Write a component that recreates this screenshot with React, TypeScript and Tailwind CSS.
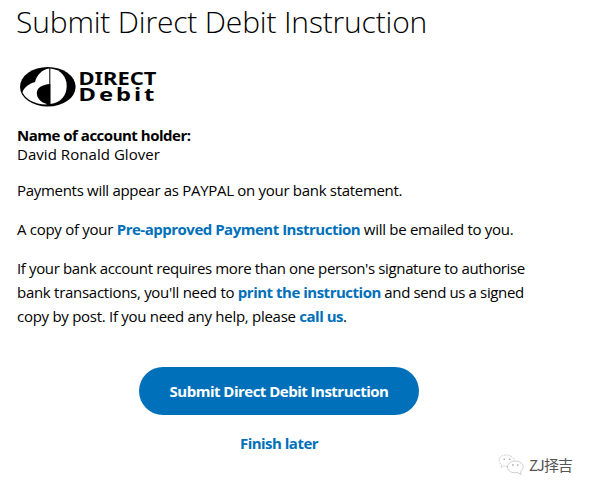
import React from 'react';

function DirectDebitLogo() {
  return (
    <svg className="-ml-[1px] block" width="144" height="44" viewBox="16 64 144 44" role="img" aria-label="Direct Debit">
      <ellipse cx="47.8" cy="86.8" rx="27.8" ry="19.8" fill="#000" />
      <path d="M50.3 68.6 C61 69.5 66.7 77 66.7 86 C66.7 95 61 103 50.3 104 Z" fill="#fff" />
      <path d="M49.3 68.6 C42 69.5 37 75 35 82 C28.5 84 23.5 88 22.5 92.5 C26 99.5 34 104 46 104.5 L49.3 103 Z" fill="#fff" />
      <path d="M50.3 84 C42 84.5 36.8 88 36.8 93 C36.8 99 42 103.5 50.3 105 Z" fill="#000" />
      <text x="78.5" y="85.4" fontSize="17.5" fontWeight="700" fontFamily="Noto Sans" textLength="78" lengthAdjust="spacingAndGlyphs">DIRECT</text>
      <text x="56.1" y="101" fontSize="17" fontWeight="700" fontFamily="Noto Sans" transform="scale(1.4 1)" letterSpacing="2.1">Debit</text>
    </svg>
  );
}

function WeChatIcon() {
  return (
    <svg className="block" width="27" height="22" viewBox="0 0 27 22" fill="none" stroke="#c8c8c8" strokeWidth="0.9" aria-hidden="true">
      <path d="M10 12.5 C8.5 12.7 7 12.5 6 12 L3 14 L3.6 10.8 C-1 7 1 1 8 1 C13 1 16 3.5 16.5 6.5" strokeDasharray="2 1" />
      <path d="M17 7 C12.5 7 9.5 10 9.5 13 C9.5 17 14 19.5 19.5 18.5 L23 20.5 L22.5 17.5 C28 13.5 24.5 7 17 7 Z" />
      <path d="M5.5 5.2h1.5M11 5.2h1.5M14 11h1.5M19 11h1.5" stroke="#777" />
    </svg>
  );
}

interface LinkProps {
  children: React.ReactNode;
}

function TextLink({ children }: LinkProps) {
  return <a href="#" className="font-bold tracking-[-0.49px] text-[#0070ba]">{children}</a>;
}

export default function App() {
  return (
    <main className="relative h-[491px] w-[591px] overflow-hidden bg-white pl-[17px] pt-1 font-['Open_Sans',sans-serif] text-[15px] text-black">
      <h1 className="-ml-px h-[60px] whitespace-nowrap text-[30px] font-light leading-9 tracking-[-0.17px]">Submit Direct Debit Instruction</h1>
      <DirectDebitLogo />

      <div className="mt-[18px] whitespace-nowrap leading-[19px]">
        <p className="font-bold tracking-[-0.49px]">Name of account holder:</p>
        <p className="tracking-[0.05px]">David Ronald Glover</p>
      </div>

      <div className="mt-[14px] space-y-[15px] whitespace-nowrap leading-6 tracking-[-0.28px]">
        <p className="tracking-[-0.3px]">Payments will appear as PAYPAL on your bank statement.</p>
        <p>A copy of your <TextLink>Pre-approved Payment Instruction</TextLink> will be emailed to you.</p>
        <p>
          <span className="tracking-[-0.36px]">If your bank account requires more than one person's signature to authorise</span>
          <br />
          bank transactions, you'll need to <TextLink>print the instruction</TextLink>
          <span className="tracking-[-0.37px]"> and send us a signed</span>
          <br />
          copy by post. If you need any help, please <TextLink>call us</TextLink>.
        </p>
      </div>

      <div className="ml-[122px] mt-[38px] flex w-[280px] flex-col items-center font-bold tracking-[-0.51px]">
        <button className="mt-px h-12 w-full rounded-full bg-[#0070ba] pt-px text-white">Submit Direct Debit Instruction</button>
        <a href="#" className="mt-4 leading-6 text-[#0070ba]">Finish later</a>
      </div>

      <div className="absolute left-[498px] top-[454px] flex items-center gap-1">
        <WeChatIcon />
        <span className="whitespace-nowrap font-['Noto_Sans_CJK_SC',sans-serif] text-[15px] leading-5 tracking-[-0.8px] text-[#555]">ZJ择吉</span>
      </div>
    </main>
  );
}
